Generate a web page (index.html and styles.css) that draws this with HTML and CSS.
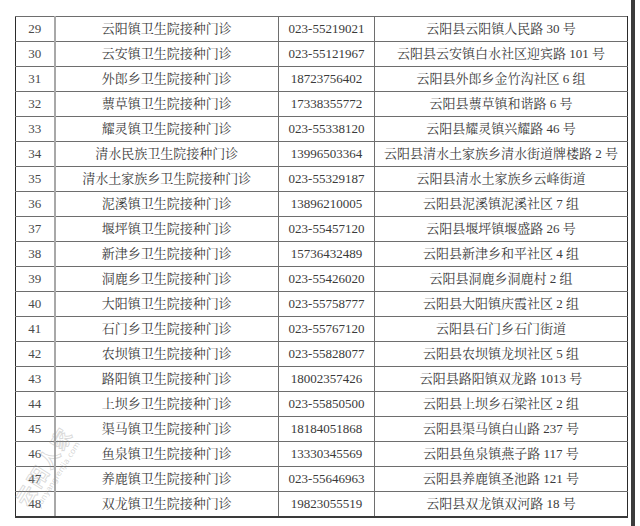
FILE: index.html
```html
<!DOCTYPE html>
<html lang="zh-CN">
<head>
<meta charset="utf-8">
<link rel="stylesheet" href="styles.css">
</head>
<body>
<div class="page">
  <table class="list">
    <colgroup><col class="c1"><col class="c2"><col class="c3"><col class="c4"></colgroup>
    <tbody>
      <tr><td>29</td><td>云阳镇卫生院接种门诊</td><td>023-55219021</td><td>云阳县云阳镇人民路 30 号</td></tr>
      <tr><td>30</td><td>云安镇卫生院接种门诊</td><td>023-55121967</td><td>云阳县云安镇白水社区迎宾路 101 号</td></tr>
      <tr><td>31</td><td>外郎乡卫生院接种门诊</td><td>18723756402</td><td>云阳县外郎乡金竹沟社区 6 组</td></tr>
      <tr><td>32</td><td>蔈草镇卫生院接种门诊</td><td>17338355772</td><td>云阳县蔈草镇和谐路 6 号</td></tr>
      <tr><td>33</td><td>耀灵镇卫生院接种门诊</td><td>023-55338120</td><td>云阳县耀灵镇兴耀路 46 号</td></tr>
      <tr><td>34</td><td>清水民族卫生院接种门诊</td><td>13996503364</td><td>云阳县清水土家族乡清水街道牌楼路 2 号</td></tr>
      <tr><td>35</td><td>清水土家族乡卫生院接种门诊</td><td>023-55329187</td><td>云阳县清水土家族乡云峰街道</td></tr>
      <tr><td>36</td><td>泥溪镇卫生院接种门诊</td><td>13896210005</td><td>云阳县泥溪镇泥溪社区 7 组</td></tr>
      <tr><td>37</td><td>堰坪镇卫生院接种门诊</td><td>023-55457120</td><td>云阳县堰坪镇堰盛路 26 号</td></tr>
      <tr><td>38</td><td>新津乡卫生院接种门诊</td><td>15736432489</td><td>云阳县新津乡和平社区 4 组</td></tr>
      <tr><td>39</td><td>洞鹿乡卫生院接种门诊</td><td>023-55426020</td><td>云阳县洞鹿乡洞鹿村 2 组</td></tr>
      <tr><td>40</td><td>大阳镇卫生院接种门诊</td><td>023-55758777</td><td>云阳县大阳镇庆霞社区 2 组</td></tr>
      <tr><td>41</td><td>石门乡卫生院接种门诊</td><td>023-55767120</td><td>云阳县石门乡石门街道</td></tr>
      <tr><td>42</td><td>农坝镇卫生院接种门诊</td><td>023-55828077</td><td>云阳县农坝镇龙坝社区 5 组</td></tr>
      <tr><td>43</td><td>路阳镇卫生院接种门诊</td><td>18002357426</td><td>云阳县路阳镇双龙路 1013 号</td></tr>
      <tr><td>44</td><td>上坝乡卫生院接种门诊</td><td>023-55850500</td><td>云阳县上坝乡石梁社区 2 组</td></tr>
      <tr><td>45</td><td>渠马镇卫生院接种门诊</td><td>18184051868</td><td>云阳县渠马镇白山路 237 号</td></tr>
      <tr><td>46</td><td>鱼泉镇卫生院接种门诊</td><td>13330345569</td><td>云阳县鱼泉镇燕子路 117 号</td></tr>
      <tr><td>47</td><td>养鹿镇卫生院接种门诊</td><td>023-55646963</td><td>云阳县养鹿镇圣池路 121 号</td></tr>
      <tr><td>48</td><td>双龙镇卫生院接种门诊</td><td>19823055519</td><td>云阳县双龙镇双河路 18 号</td></tr>
    </tbody>
  </table>
  <div class="edge"></div>
  <div class="watermark">
    <span class="wm-big">云阳人家</span>
    <span class="wm-small">yunyangrenjia.com</span>
  </div>
</div>
</body>
</html>
```

FILE: styles.css
```css
html, body {
  margin: 0;
  padding: 0;
  background: #ffffff;
}

.page {
  position: relative;
  width: 640px;
  height: 526px;
  display: flex;
  align-items: flex-start;
  padding-left: 15px;
  box-sizing: border-box;
  overflow: hidden;
}

.list {
  margin-top: 16px;
  width: 612px;
  border-collapse: collapse;
  table-layout: fixed;
  font-family: "Liberation Serif", "Noto Serif CJK SC", "Noto Sans CJK SC", serif;
  font-size: 13px;
  color: #3a3a3a;
  border: 1px solid #2b2b2b;
}

.c1 { width: 39px; }
.c2 { width: 224px; }
.c3 { width: 96px; }
.c4 { width: 253px; }

.list td {
  height: 24px;
  padding: 0;
  text-align: center;
  vertical-align: middle;
  border: 1px solid #6e6e6e;
  white-space: nowrap;
  line-height: 24px;
}

.list td:first-child {
  border-left: 1px solid #2b2b2b;
  border-right: 2px solid #a8a8a8;
  color: #4a4a4a;
}

.list td:last-child {
  border-right: 1px solid #2b2b2b;
}

.list tr:last-child td {
  border-bottom: 2px solid #3a3a3a;
}

.edge {
  width: 4px;
  height: 526px;
  margin-left: 3px;
  background: #3c3c3c;
}

.watermark {
  position: absolute;
  left: 4px;
  top: 452px;
  display: flex;
  flex-direction: column;
  align-items: center;
  transform: rotate(-58deg);
  pointer-events: none;
}

.wm-big {
  font-family: "Noto Sans CJK SC", sans-serif;
  font-size: 20px;
  line-height: 24px;
  font-weight: 700;
  color: rgba(255, 255, 255, 0);
  -webkit-text-stroke: 1px rgba(150, 150, 150, 0.35);
  letter-spacing: 2px;
}

.wm-small {
  font-family: "DejaVu Sans", sans-serif;
  font-size: 8px;
  line-height: 10px;
  color: rgba(150, 150, 150, 0.4);
}
```
